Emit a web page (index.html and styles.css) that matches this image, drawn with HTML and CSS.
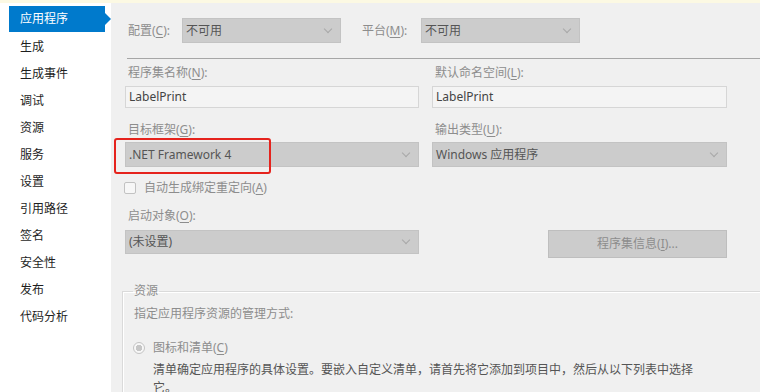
FILE: index.html
```html
<!DOCTYPE html>
<html>

<head>
  <meta charset="utf-8">
  <title>应用程序 - 属性</title>
  <link rel="stylesheet" href="styles.css">
</head>

<body>
  <div class="strip"></div>
  <div class="main">
    <nav class="side">
      <div class="tab active">应用程序</div>
      <div class="tab">生成</div>
      <div class="tab">生成事件</div>
      <div class="tab">调试</div>
      <div class="tab">资源</div>
      <div class="tab">服务</div>
      <div class="tab">设置</div>
      <div class="tab">引用路径</div>
      <div class="tab">签名</div>
      <div class="tab">安全性</div>
      <div class="tab">发布</div>
      <div class="tab">代码分析</div>
    </nav>

    <section class="page">
      <div class="toprow">
        <span class="label cfg-label">配置(<u>C</u>):</span>
        <div class="select small">不可用<span class="chev"></span></div>
        <span class="label plat-label">平台(<u>M</u>):</span>
        <div class="select small">不可用<span class="chev"></span></div>
      </div>

      <div class="rule"></div>

      <div class="grid">
        <div class="field">
          <div class="label">程序集名称(<u>N</u>):</div>
          <div class="input">LabelPrint</div>
        </div>
        <div class="field">
          <div class="label">默认命名空间(<u>L</u>):</div>
          <div class="input">LabelPrint</div>
        </div>

        <div class="field">
          <div class="label">目标框架(<u>G</u>):</div>
          <div class="select tall">.NET Framework 4<span class="chev"></span>
            <div class="mark"></div>
          </div>
        </div>
        <div class="field">
          <div class="label">输出类型(<u>U</u>):</div>
          <div class="select tall">Windows 应用程序<span class="chev"></span></div>
        </div>

        <div class="check">
          <span class="box"></span>
          <span class="label">自动生成绑定重定向(<u>A</u>)</span>
        </div>
        <div></div>

        <div class="field">
          <div class="label">启动对象(<u>O</u>):</div>
          <div class="select start">(未设置)<span class="chev"></span></div>
        </div>
        <div class="field btn-cell">
          <div class="button">程序集信息(<u>I</u>)...</div>
        </div>
      </div>

      <fieldset class="group">
        <legend>资源</legend>
        <div class="label hint">指定应用程序资源的管理方式:</div>
        <div class="radio-row">
          <span class="radio"></span>
          <span class="label">图标和清单(<u>C</u>)</span>
        </div>
        <p class="desc">清单确定应用程序的具体设置。要嵌入自定义清单，请首先将它添加到项目中，然后从以下列表中选择它。</p>
      </fieldset>
    </section>
  </div>
</body>

</html>
```

FILE: styles.css
```css
body {
  margin: 0;
  width: 760px;
  height: 392px;
  overflow: hidden;
  font-family: "Noto Sans", "Noto Sans CJK SC", sans-serif;
  font-size: 12px;
  color: #1e1e1e;
  background: #f0f0f0;
}

u {
  text-decoration-thickness: 1px;
  text-underline-offset: 2px;
}

.strip {
  height: 3px;
  background: #fcf9e3;
}

.main {
  display: flex;
  height: 389px;
}

/* left navigation */
.side {
  width: 111px;
  flex: none;
  background: #fff;
  padding-top: 3px;
}

.tab {
  position: relative;
  height: 27px;
  line-height: 27px;
  margin-left: 9px;
  width: 96px;
  padding-left: 11px;
  box-sizing: border-box;
}

.tab.active {
  height: 26px;
  line-height: 26px;
  margin-bottom: 1px;
  background: #007acc;
  color: #fff;
}

.tab.active::after {
  content: "";
  position: absolute;
  right: -6px;
  top: 7px;
  border-top: 6px solid transparent;
  border-bottom: 6px solid transparent;
  border-left: 6px solid #007acc;
}

/* property page */
.page {
  flex: 1;
  padding: 15px 0 0 14px;
  overflow: hidden;
}

.label {
  color: #8d8d8d;
  line-height: 16px;
  white-space: nowrap;
}

.field > .label {
  padding-left: 3px;
}

.toprow {
  display: flex;
  align-items: center;
  height: 25px;
}

.cfg-label {
  width: 57px;
  padding-left: 3px;
  box-sizing: border-box;
}

.plat-label {
  width: 59px;
  margin-left: 21px;
}

.select {
  position: relative;
  box-sizing: border-box;
  background: #cccccc;
  border: 1px solid #c3c3c3;
  color: #555;
  padding-left: 3px;
  white-space: nowrap;
}

.select.small {
  width: 159px;
  height: 25px;
  line-height: 23px;
}

.select.tall {
  margin-top: 4px;
  height: 25px;
  line-height: 23px;
}

.select.start {
  margin-top: 6px;
  height: 24px;
  line-height: 22px;
}

.chev {
  position: absolute;
  right: 9px;
  top: 50%;
  width: 5px;
  height: 5px;
  margin-top: -5px;
  border-right: 1px solid #a8a8a8;
  border-bottom: 1px solid #a8a8a8;
  transform: rotate(45deg);
}

.rule {
  height: 1px;
  background: #a6a6a6;
  margin: 15px 0 0 2px;
}

.grid {
  display: grid;
  grid-template-columns: 294px 295px;
  column-gap: 13px;
  row-gap: 14px;
  margin-top: 6px;
}

.input {
  margin-top: 5px;
  height: 22px;
  line-height: 20px;
  box-sizing: border-box;
  border: 1px solid #d6d6d6;
  background: #f4f4f4;
  color: #444;
  padding-left: 3px;
}

.mark {
  position: absolute;
  left: -12px;
  top: -5px;
  width: 157px;
  height: 36px;
  box-sizing: border-box;
  border: 2px solid #e5231d;
  border-radius: 3px;
}

.check {
  display: flex;
  align-items: center;
  gap: 8px;
  height: 14px;
  margin-top: 0;
}

.box {
  width: 12px;
  height: 12px;
  box-sizing: border-box;
  border: 1px solid #c2c2c2;
  border-radius: 2px;
  background: #f7f7f7;
  margin-left: -1px;
}

.grid .field:nth-child(7) {
  margin-top: -1px;
}

.btn-cell {
  display: flex;
  justify-content: flex-end;
}

.button {
  margin-top: 21px;
  width: 179px;
  height: 28px;
  line-height: 26px;
  box-sizing: border-box;
  background: #cccccc;
  border: 1px solid #bebebe;
  color: #8d8d8d;
  text-align: center;
}

/* resources group */
.group {
  margin: 25px -10px 0 -3px;
  padding: 0 60px 0 10px;
  border: 1px solid #dadada;
  box-shadow: inset 1px 1px 0 #fff;
}

.group legend {
  padding: 0 1px;
  color: #8d8d8d;
  line-height: 16px;
}

.hint {
  margin: 7px 0 0 1px;
}

.radio-row {
  display: flex;
  align-items: center;
  gap: 8px;
  margin-top: 18px;
  height: 16px;
}

.radio {
  width: 12px;
  height: 12px;
  box-sizing: border-box;
  border-radius: 50%;
  border: 1px solid #c4c4c4;
  background: radial-gradient(circle, #c6c6c6 0 3px, #f7f7f7 3.5px);
}

.desc {
  margin: 5px 0 0 20px;
  width: 550px;
  line-height: 18px;
  color: #555;
}
```
